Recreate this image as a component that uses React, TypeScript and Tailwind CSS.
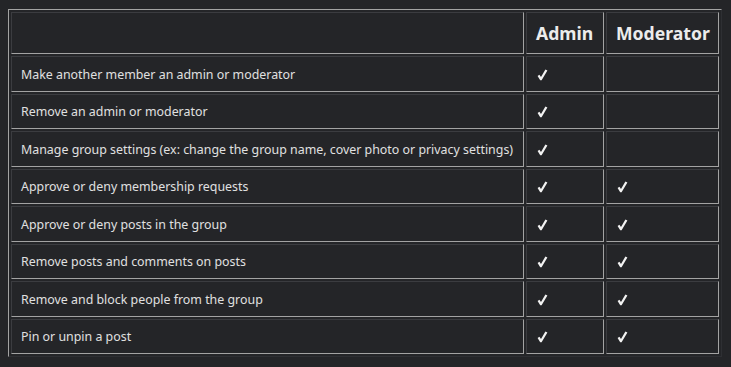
const ROWS: { label: string; admin: boolean; mod: boolean }[] = [
  { label: "Make another member an admin or moderator", admin: true, mod: false },
  { label: "Remove an admin or moderator", admin: true, mod: false },
  {
    label:
      "Manage group settings (ex: change the group name, cover photo or privacy settings)",
    admin: true,
    mod: false,
  },
  { label: "Approve or deny membership requests", admin: true, mod: true },
  { label: "Approve or deny posts in the group", admin: true, mod: true },
  { label: "Remove posts and comments on posts", admin: true, mod: true },
  { label: "Remove and block people from the group", admin: true, mod: true },
  { label: "Pin or unpin a post", admin: true, mod: true },
];

const cell =
  "border border-t-[#3b3c40] border-l-[#3b3c40] border-b-[#a3a3a3] border-r-[#a3a3a3] px-[9px] align-middle";

function Check({ on }: { on: boolean }) {
  if (!on) return null;
  return (
    <svg width="11" height="12" viewBox="0 0 11 12" className="block ml-[1px] mt-[2px]">
      <path
        d="M0.6 7 L2.4 5.7 L4 8 L8.4 0.6 L10.4 1.6 L4.6 11.2 L3.2 11.2 Z"
        fill="#f2f2f2"
      />
    </svg>
  );
}

export default function App() {
  return (
    <div
      className="w-[731px] h-[367px] bg-[#242528] pt-[9px] pl-[8px]"
      style={{ fontFamily: '"Noto Sans", "Open Sans", sans-serif' }}
    >
      <table className="w-[714px] border-separate border-spacing-[2px] border border-t-[#a3a3a3] border-l-[#a3a3a3] border-b-[#2e2f33] border-r-[#2e2f33] table-fixed">
        <colgroup>
          <col className="w-[513px]" />
          <col className="w-[78px]" />
          <col />
        </colgroup>
        <thead>
          <tr className="h-[42px]">
            <th className={cell}></th>
            <th className={`${cell} text-left text-[17.6px] font-bold text-[#ececec]`}>Admin</th>
            <th className={`${cell} text-left text-[17.6px] font-bold text-[#ececec]`}>Moderator</th>
          </tr>
        </thead>
        <tbody>
          {ROWS.map((r) => (
            <tr key={r.label} className="h-[35.5px]">
              <td className={`${cell} pt-[3px] text-[12.4px] text-[#e0e0e0] whitespace-nowrap`}>
                {r.label}
              </td>
              <td className={cell}>
                <Check on={r.admin} />
              </td>
              <td className={cell}>
                <Check on={r.mod} />
              </td>
            </tr>
          ))}
        </tbody>
      </table>
    </div>
  );
}
